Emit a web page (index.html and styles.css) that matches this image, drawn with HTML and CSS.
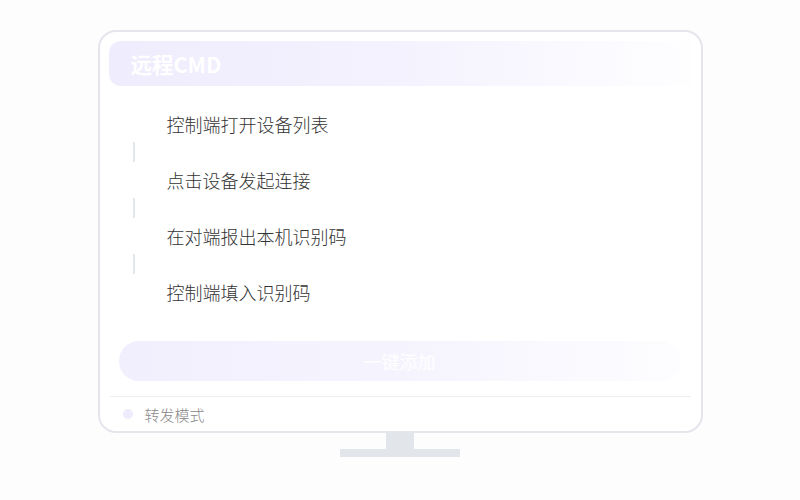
FILE: index.html
```html
<!DOCTYPE html>
<html lang="zh">

<head>
    <meta charset="UTF-8">
    <meta name="viewport" content="width=device-width, initial-scale=1.0">
    <title>远程CMD</title>
    <link rel="stylesheet" href="styles.css">
</head>

<body>
    <div class="monitor">
        <div class="screen">
            <div class="screen-head">远程CMD</div>
            <div class="steps">
                <div class="step">控制端打开设备列表</div>
                <div class="step-line"></div>
                <div class="step">点击设备发起连接</div>
                <div class="step-line"></div>
                <div class="step">在对端报出本机识别码</div>
                <div class="step-line"></div>
                <div class="step">控制端填入识别码</div>
            </div>
            <div class="add-btn">一键添加</div>
            <div class="screen-foot">
                <span class="dot"></span>
                <span class="mode">转发模式</span>
            </div>
        </div>
        <div class="neck"></div>
        <div class="base"></div>
    </div>
</body>

</html>
```

FILE: styles.css
```css
* {
    box-sizing: border-box;
}

body {
    margin: 0;
    background: #fdfdfe;
    font-family: "Noto Sans CJK SC", "Noto Sans", sans-serif;
}

.monitor {
    width: 605px;
    margin: 30px auto 0;
    display: flex;
    flex-direction: column;
    align-items: center;
}

.screen {
    width: 100%;
    border: 2px solid #e4e6ec;
    border-radius: 18px;
    background: #fff;
    padding: 9px 0 0;
}

.screen-head {
    margin: 0 9px;
    height: 45px;
    line-height: 45px;
    padding-left: 22px;
    border-radius: 12px 0 0 12px;
    background: linear-gradient(90deg, #efecfd 0%, #f4f2fe 50%, #fcfcff 90%, #fefeff 100%);
    color: #fff;
    font-size: 21.5px;
    font-weight: 700;
}

.steps {
    padding: 26px 0 0 67px;
    display: flex;
    flex-direction: column;
}

.step {
    height: 24px;
    line-height: 24px;
    font-size: 18px;
    font-weight: 300;
    color: #333;
}

.step-line {
    width: 2px;
    height: 20px;
    margin: 6px 0 6px -34px;
    background: #e3e6ee;
}

.add-btn {
    margin: 37px 20px 0 19px;
    height: 40px;
    line-height: 40px;
    border-radius: 20px;
    text-align: center;
    color: #fff;
    font-size: 18px;
    background: linear-gradient(90deg, #f1effd 0%, #f5f4fe 50%, #fdfdff 100%);
}

.screen-foot {
    margin: 15px 10px 0;
    border-top: 1px solid #eceef2;
    height: 35px;
    display: flex;
    align-items: center;
    padding-left: 13px;
}

.dot {
    width: 10px;
    height: 10px;
    border-radius: 50%;
    background: #eeebfc;
}

.mode {
    margin-left: 12px;
    font-size: 15px;
    font-weight: 300;
    color: #888;
}

.neck {
    width: 28px;
    height: 16px;
    background: #e2e5e9;
}

.base {
    width: 120px;
    height: 8px;
    background: #e2e5e9;
}
```
